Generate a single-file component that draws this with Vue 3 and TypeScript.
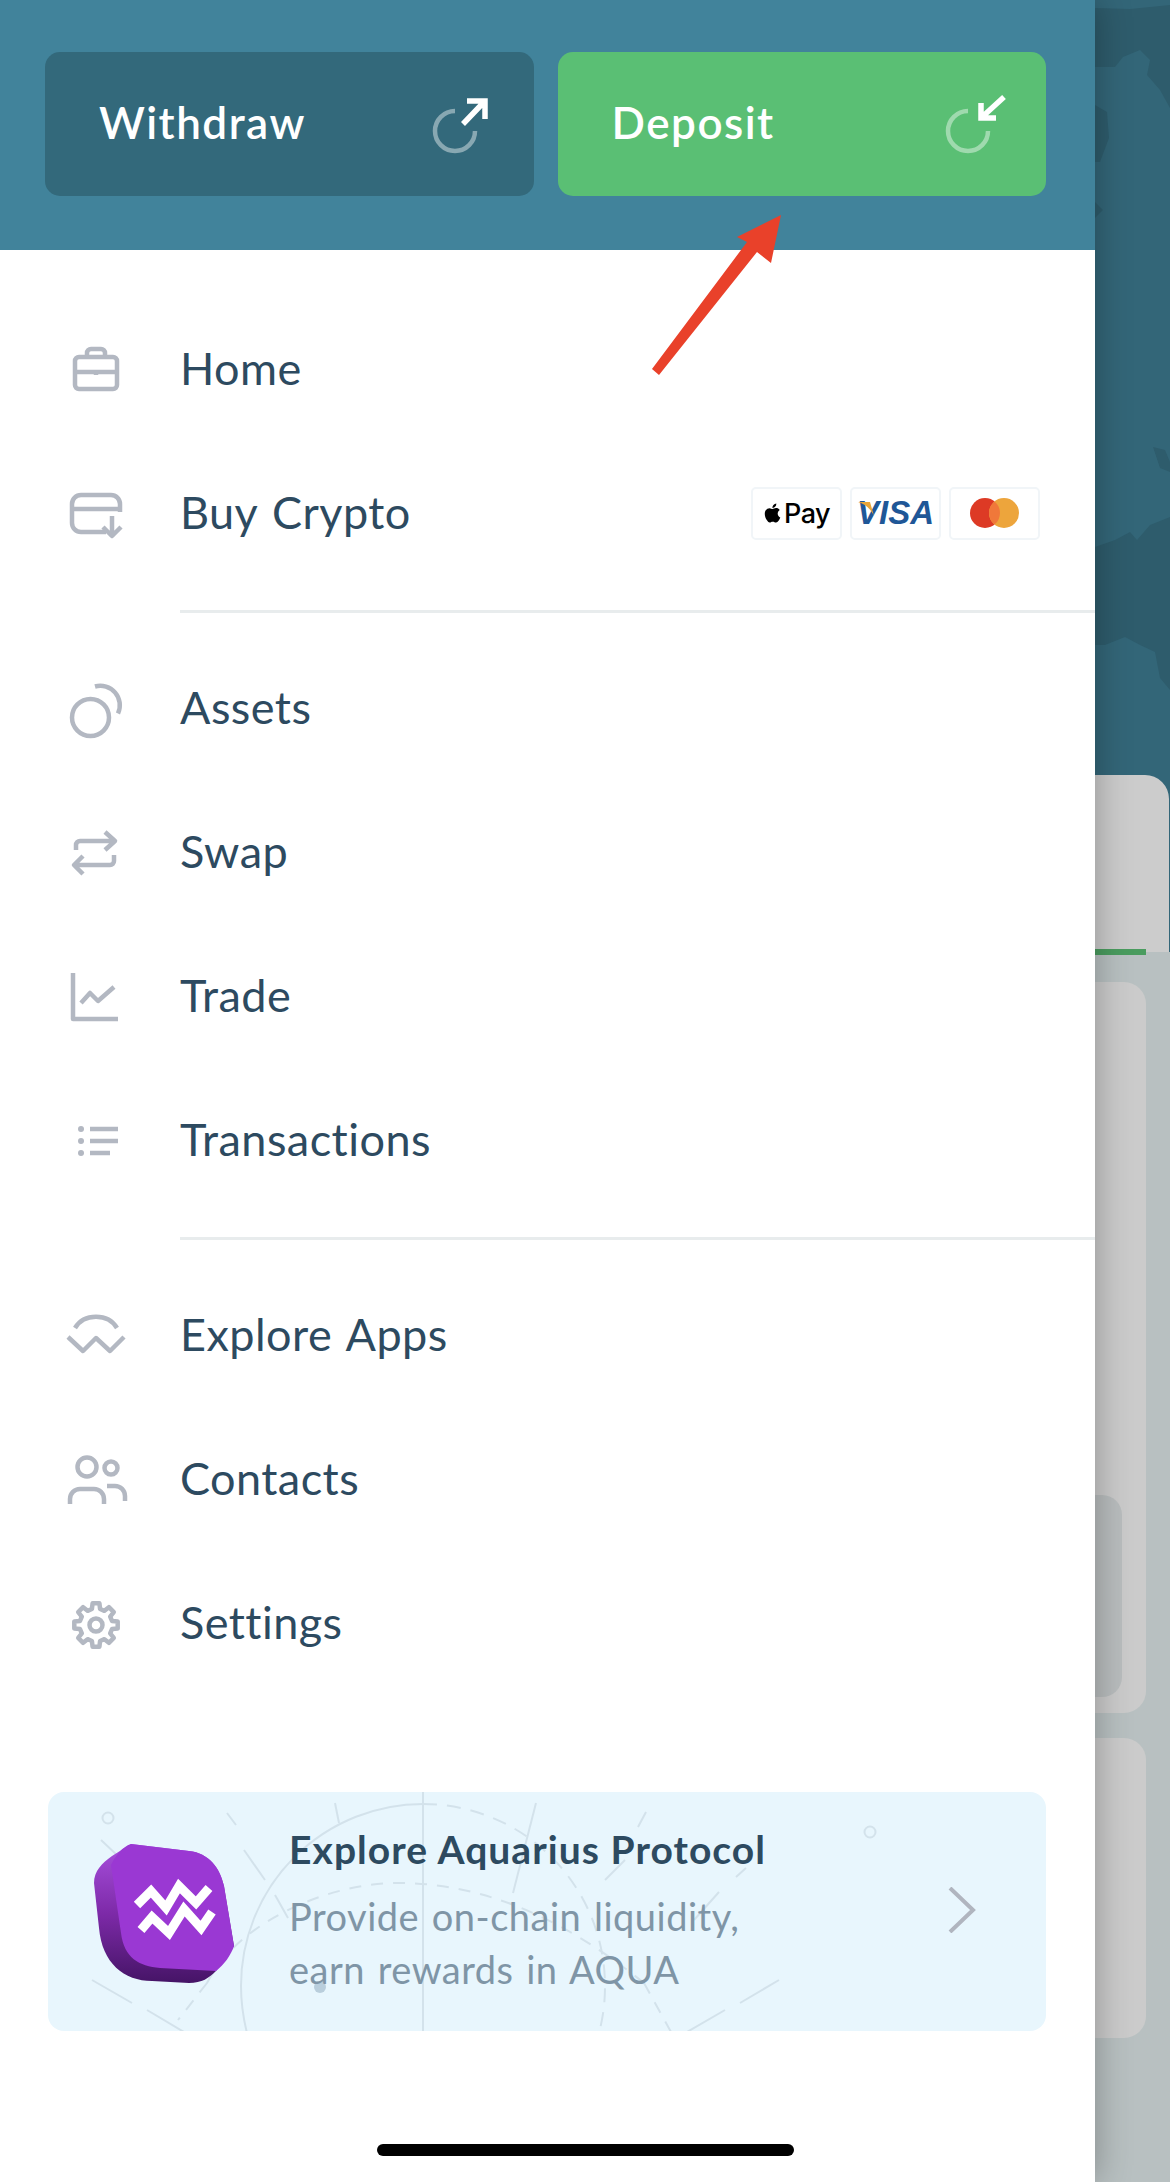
<script setup lang="ts">
interface Item { label: string; d: string }

function gear(cx: number, cy: number, ro: number, ri: number, teeth: number): string {
  const pts: string[] = []
  const step = (Math.PI * 2) / teeth
  for (let i = 0; i < teeth; i++) {
    const a = i * step - Math.PI / 2
    const list: [number, number][] = [
      [ro, a - step * 0.2],
      [ro, a + step * 0.2],
      [ri, a + step * 0.32],
      [ri, a + step * 0.68],
    ]
    for (const [r, t] of list) {
      pts.push(`${(cx + r * Math.cos(t)).toFixed(1)} ${(cy + r * Math.sin(t)).toFixed(1)}`)
    }
  }
  return `M${pts.join('L')}Z`
}

const groupA: Item[] = [
  { label: 'Home', d: 'M15 20H49a4 4 0 0 1 4 4V48a4 4 0 0 1-4 4H15a4 4 0 0 1-4-4V24a4 4 0 0 1 4-4ZM11 35H53M23 20V16a4 4 0 0 1 4-4H37a4 4 0 0 1 4 4V20M32 33V38' },
  { label: 'Buy Crypto', d: 'M42 51H17a9 9 0 0 1-9-9V23a9 9 0 0 1 9-9H47a9 9 0 0 1 9 9V31M8 28H56M48 35V54M39 46L48 55L57 46' },
]
const groupB: Item[] = [
  { label: 'Assets', d: 'M8 41.500a18.500 18.500 0 1 0 37 0a18.500 18.500 0 1 0-37 0ZM31 10.500A19.500 19.500 0 0 1 54 37.500' },
  { label: 'Swap', d: 'M12 30V25a4 4 0 0 1 4-4H51M41 12L51 21L41 30M50 35V41a4 4 0 0 1-4 4H10M19 36L10 45L19 54' },
  { label: 'Trade', d: 'M9 9V55H54M17 39L26 29L34 37L50 23' },
  { label: 'Transactions', d: 'M26 21H54M26 33H54M26 45H46' },
]
const groupC: Item[] = [
  { label: 'Explore Apps', d: 'M11 25C20 10 44 10 53 25M4 34L19 48L32 35L46 48L60 34' },
  { label: 'Contacts', d: 'M13.500 20a9.500 9.500 0 1 0 19 0a9.500 9.500 0 1 0-19 0ZM6 57V52a10 10 0 0 1 10-10H30a10 10 0 0 1 10 10V57M40.500 21a6.500 6.500 0 1 0 13 0a6.500 6.500 0 1 0-13 0ZM43 39H51a10 10 0 0 1 10 10V54' },
  { label: 'Settings', d: gear(32, 34, 22, 16.5, 8) + 'M25.500 34a6.500 6.500 0 1 0 13 0a6.500 6.500 0 1 0-13 0Z' },
]

const bannerLines: [number, number, number, number][] = [
  [179, 21, 188, 33], [196, 58, 217, 88], [53, 48, 71, 65], [227, 103, 240, 126],
  [287, 11, 291, 31], [488, 11, 465, 101], [598, 20, 590, 35], [577, 68, 557, 88],
  [698, 76, 688, 85], [671, 100, 646, 128], [44, 188, 84, 211], [99, 218, 136, 240],
  [731, 188, 692, 211], [677, 218, 639, 240], [375, 0, 375, 239],
]
</script>

<template>
  <div class="page">
    <aside class="drawer">
      <header class="head">
        <button class="action withdraw">
          <span>Withdraw</span>
          <svg class="action-icon" viewBox="0 0 60 60" width="60" height="60" fill="none">
            <path d="M25 14A20 20 0 1 0 45 34" stroke="#fff" stroke-opacity=".42" stroke-width="4.500" />
            <path d="M33 27L54 5M37 4H55V22" stroke="#fff" stroke-width="5.500" />
          </svg>
        </button>
        <button class="action deposit">
          <span>Deposit</span>
          <svg class="action-icon" viewBox="0 0 60 60" width="60" height="60" fill="none">
            <path d="M26 14A20 20 0 1 0 46 34" stroke="#fff" stroke-opacity=".42" stroke-width="4.500" />
            <path d="M62 0L39 21M39 6V21H54" stroke="#fff" stroke-width="5.500" />
          </svg>
        </button>
      </header>

      <nav class="menu">
        <a v-for="item in groupA" :key="item.label" class="row">
          <svg class="row-icon" viewBox="0 0 64 64" width="64" height="64"><path :d="item.d" /></svg>
          <span class="label">{{ item.label }}</span>
          <div v-if="item.label === 'Buy Crypto'" class="pays">
            <div class="pay">
              <svg viewBox="0 0 24 24" width="19" height="22"><path fill="#000" d="M12.152 6.896c-.948 0-2.415-1.078-3.96-1.04-2.04.027-3.91 1.183-4.961 3.014-2.117 3.675-.546 9.103 1.519 12.09 1.013 1.454 2.208 3.09 3.792 3.039 1.52-.065 2.09-.987 3.935-.987 1.831 0 2.35.987 3.96.948 1.637-.026 2.676-1.48 3.676-2.948 1.156-1.688 1.636-3.325 1.662-3.415-.039-.013-3.182-1.221-3.22-4.857-.026-3.04 2.48-4.494 2.597-4.559-1.429-2.09-3.623-2.324-4.39-2.376-2-.156-3.675 1.09-4.61 1.09zM15.53 3.83c.843-1.012 1.4-2.427 1.245-3.83-1.207.052-2.662.805-3.532 1.818-.78.896-1.454 2.338-1.273 3.714 1.338.104 2.715-.688 3.559-1.701" /></svg>
              <b class="apple">Pay</b>
            </div>
            <div class="pay">
              <svg class="flick" viewBox="0 0 20 16" width="20" height="16"><path fill="#e8a53a" d="M0 0H12L16 14C13 7 7 2 0 0Z" /></svg>
              <b class="visa">VISA</b>
            </div>
            <div class="pay">
              <svg viewBox="0 0 50 30" width="50" height="30">
                <circle cx="15" cy="15" r="15" fill="#dd3a25" />
                <circle cx="34" cy="15" r="15" fill="#eda53c" />
                <path fill="#f0783a" d="M24.500 3.400a15 15 0 0 1 0 23.200a15 15 0 0 1 0-23.200Z" />
              </svg>
            </div>
          </div>
        </a>
        <div class="rule"></div>
        <a v-for="item in groupB" :key="item.label" class="row">
          <svg class="row-icon" viewBox="0 0 64 64" width="64" height="64">
            <path :d="item.d" />
            <path v-if="item.label === 'Transactions'" class="dots" d="M17 21h.01M17 33h.01M17 45h.01" />
          </svg>
          <span class="label">{{ item.label }}</span>
        </a>
        <div class="rule"></div>
        <a v-for="item in groupC" :key="item.label" class="row">
          <svg class="row-icon" viewBox="0 0 64 64" width="64" height="64"><path :d="item.d" /></svg>
          <span class="label">{{ item.label }}</span>
        </a>
      </nav>

      <section class="banner">
        <svg class="banner-art" viewBox="0 0 998 239" width="998" height="239" fill="none" stroke="#d3e2eb" stroke-width="2">
          <line v-for="(l, i) in bannerLines" :key="i" :x1="l[0]" :y1="l[1]" :x2="l[2]" :y2="l[3]" />
          <path d="M375 12A182 182 0 0 0 193 194C193 215 196 230 200 245" />
          <path d="M375 12A182 182 0 0 1 557 194C557 215 554 230 550 245" stroke-dasharray="14 10" />
          <path d="M159 191C190 130 280 91 350 91C440 91 520 130 596 191M159 191L130 228M596 191L623 240" stroke-dasharray="12 10" />
          <circle cx="60" cy="26" r="5.500" />
          <circle cx="822" cy="40" r="5.500" />
          <circle cx="272" cy="195" r="6" fill="#b9cedc" stroke="none" />
        </svg>
        <svg class="logo" viewBox="0 0 140 140" width="140" height="140">
          <defs>
            <linearGradient id="sideGrad" x1="0" y1="0" x2="0" y2="1">
              <stop offset="0" stop-color="#a850de" />
              <stop offset=".5" stop-color="#7d2aa8" />
              <stop offset="1" stop-color="#451466" />
            </linearGradient>
          </defs>
          <path fill="url(#sideGrad)" d="M37 1L18 13C8 20 0 28 0 40L5 85C8 120 30 138 58 138L95 140C108 140 115 135 122 128L140 103L130 43C126 25 115 10 95 8Z" />
          <path fill="#9a38d3" d="M37 1L95 8C115 10 126 25 130 43L140 103C137 112 130 122 122 128L66 125C45 123 30 115 27 90L17 22C22 12 28 4 37 1Z" />
          <path fill="none" stroke="#fff" stroke-width="9" d="M43 62L57 48L72 65L85 43L102 60L115 45M47 87L58 74L75 90L90 66L107 85L118 69" />
        </svg>
        <div class="banner-text">
          <h3>Explore Aquarius Protocol</h3>
          <p>Provide on-chain liquidity,<br />earn rewards in AQUA</p>
        </div>
        <svg class="chev" viewBox="0 0 28 46" width="28" height="46" fill="none"><path d="M2 1L25 23L2 45" stroke="#b0b5bf" stroke-width="4" /></svg>
      </section>
    </aside>

    <div class="behind">
      <div class="behind-top">
        <svg viewBox="0 0 75 775" width="75" height="775">
          <g fill="#2e5c6c">
            <path d="M0 8L35 9L75 5V108L65 90L52 75L55 60L45 50L28 57L20 67H0Z" />
            <path d="M0 105L12 112L14 138L5 162H0Z" />
            <path d="M0 202L8 210L0 218Z" />
            <path d="M58 447L70 450L75 462V472L65 468Z" />
            <path d="M0 547L20 540L35 532L42 540L55 525L75 517V690L65 678L60 652L45 645L30 637L10 645H0Z" />
          </g>
        </svg>
      </div>
      <div class="behind-low">
        <div class="sheet"><i class="tab"></i></div>
        <div class="cards">
          <div class="card first"><div class="inner"></div></div>
          <div class="card second"></div>
        </div>
      </div>
    </div>

    <svg class="red-arrow" viewBox="0 0 160 180" width="160" height="180">
      <path fill="#e9412a" d="M135 5L125 53L111 42L13 165L6 159L101 32L91 27Z" />
    </svg>
    <div class="home-bar"></div>
  </div>
</template>

<style>
html, body { margin: 0; padding: 0; background: #fff; }
</style>

<style scoped>
.page {
  position: relative;
  display: flex;
  width: 1170px;
  height: 2182px;
  overflow: hidden;
  font-family: "Lato", "Open Sans", sans-serif;
}
.drawer {
  position: relative;
  z-index: 1;
  flex: 0 0 1095px;
  background: #fff;
  box-shadow: 0 0 34px rgba(0, 0, 0, 0.3);
}
.head {
  display: flex;
  gap: 24px;
  box-sizing: border-box;
  height: 250px;
  padding: 52px 49px 54px 45px;
  background: #41839b;
}
.action {
  flex: 1;
  display: flex;
  align-items: center;
  justify-content: space-between;
  padding: 0 44px 4px 54px;
  border: 0;
  border-radius: 15px;
  color: #fff;
  font: 600 44px "Lato", sans-serif;
  letter-spacing: 1.5px;
}
.withdraw { background: #33697b; }
.deposit { background: #5abf74; }
.action-icon { overflow: visible; margin-top: 10px; }

.menu { padding-top: 47px; }
.row {
  display: flex;
  align-items: center;
  height: 144px;
  padding-left: 64px;
  color: #2d4a60;
  font-size: 45px;
  letter-spacing: 0.45px;
  word-spacing: 3px;
}
.label { margin-bottom: 3px; }
.row-icon {
  flex: none;
  margin-right: 52px;
  overflow: visible;
  fill: none;
  stroke: #b3b8c2;
  stroke-width: 4.5;
  stroke-linejoin: round;
}
.dots { stroke-width: 6; stroke-linecap: round; }
.rule { height: 3px; margin: 25px 0 23px 180px; background: #e8eced; }

.pays { display: flex; gap: 8px; margin-left: auto; margin-right: 55px; }
.pay {
  position: relative;
  display: flex;
  align-items: center;
  justify-content: center;
  gap: 2px;
  box-sizing: border-box;
  width: 91px;
  height: 53px;
  border: 2px solid #f1f5f8;
  border-radius: 5px;
  background: #fff;
}
.apple { font: 500 27px "Inter", sans-serif; color: #000; letter-spacing: -0.5px; }
.visa { font: italic 700 33px "Liberation Sans", sans-serif; color: #1f5797; letter-spacing: 0; }
.flick { position: absolute; left: 6px; top: 13px; }

.banner {
  position: relative;
  display: flex;
  align-items: center;
  box-sizing: border-box;
  width: 998px;
  height: 239px;
  margin: 97px 0 0 48px;
  padding: 2px 70px 0 46px;
  border-radius: 16px;
  overflow: hidden;
  background: #e8f6fd;
}
.banner-art { position: absolute; left: 0; top: 0; }
.logo { position: relative; flex: none; }
.banner-text { position: relative; margin: 0 0 3px 55px; }
.banner-text h3 {
  margin: 0 0 18px;
  font-size: 39px;
  font-weight: 700;
  line-height: 46px;
  color: #2d4a60;
  letter-spacing: 1.05px;
}
.banner-text p {
  margin: 0;
  font-size: 38px;
  line-height: 53px;
  color: #7f95a6;
  letter-spacing: 0.5px;
  word-spacing: 2.5px;
}
.chev { position: relative; flex: none; margin: 0 0 5px auto; }

.behind { flex: 1; display: flex; flex-direction: column; }
.behind-top { height: 775px; background: #336678; }
.behind-top svg { display: block; }
.behind-low { flex: 1; background: #336678; }
.sheet {
  position: relative;
  height: 177px;
  margin-right: 1px;
  border-radius: 0 24px 0 0;
  background: #cccccc;
}
.tab {
  position: absolute;
  left: 0;
  top: 174px;
  width: 51px;
  height: 6px;
  background: #4a9c5f;
}
.cards {
  height: 1230px;
  padding: 30px 24px 0 0;
  background: #b8c0c1;
}
.card { background: #cbcbcb; border-radius: 0 22px 22px 0; }
.first { height: 731px; padding-top: 513px; box-sizing: border-box; }
.second { height: 300px; margin-top: 25px; }
.inner { height: 202px; margin-right: 24px; background: #b9bdbe; border-radius: 0 20px 20px 0; }

.red-arrow { position: absolute; left: 646px; top: 210px; z-index: 2; }
.home-bar {
  position: absolute;
  left: 377px;
  top: 2144px;
  z-index: 2;
  width: 417px;
  height: 12px;
  border-radius: 6px;
  background: #000;
}
</style>
